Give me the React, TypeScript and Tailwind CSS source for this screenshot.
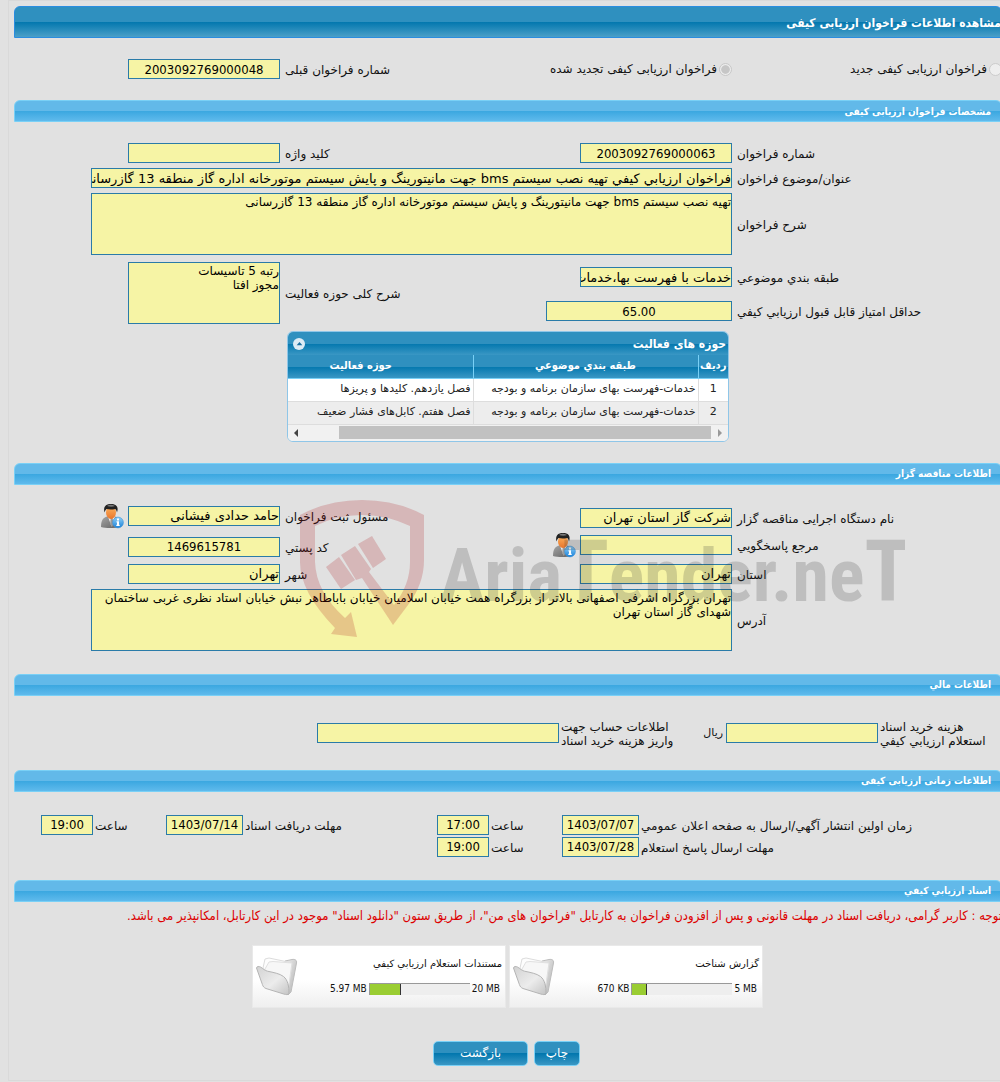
import React, { useId } from "react";

const condensed = "font-['DejaVu_Sans_Condensed','DejaVu_Sans',Tahoma,sans-serif]";
const regular = "font-['DejaVu_Sans',Tahoma,sans-serif]";

const fieldClass =
  "block rounded-none border border-[#2a7ba8] bg-[#f6f4a5] text-black outline-none";

function Bar({ children }: { children: React.ReactNode }) {
  return (
    <h2 className="flex h-[22px] items-center rounded-t-md border border-[#79d0f6] bg-[linear-gradient(#62b9e9_50%,#3aa7e0_50%,#5fbaec)] pr-2.5 text-[10px] font-bold text-white">
      {children}
    </h2>
  );
}

function Label({
  id,
  className,
  children,
}: {
  id: string;
  className: string;
  children: React.ReactNode;
}) {
  return (
    <label htmlFor={id} className={`pt-0.5 text-left text-[12px] leading-[14px] ${regular} ${className}`}>
      {children}
    </label>
  );
}

function TextField({
  label,
  value = "",
  labelClass,
  inputClass,
  center = false,
}: {
  label: React.ReactNode;
  value?: string;
  labelClass: string;
  inputClass: string;
  center?: boolean;
}) {
  const id = useId();
  return (
    <>
      <Label id={id} className={labelClass}>
        {label}
      </Label>
      <input
        id={id}
        readOnly
        defaultValue={value}
        className={`${fieldClass} h-5 text-[13px] ${center ? `text-center ${condensed}` : `text-right ${regular}`} ${inputClass}`}
      />
    </>
  );
}

function AreaField({
  label,
  value,
  labelClass,
  inputClass,
}: {
  label: string;
  value: string;
  labelClass: string;
  inputClass: string;
}) {
  const id = useId();
  return (
    <>
      <Label id={id} className={labelClass}>
        {label}
      </Label>
      <textarea
        id={id}
        readOnly
        defaultValue={value}
        className={`${fieldClass} ${regular} h-[62px] resize-none overflow-hidden pt-px text-[12px] leading-[14px] ${inputClass}`}
      />
    </>
  );
}

const mainLabel = "w-[270px] shrink-0 pl-[5px]";
const sideLabel = "flex-1 pl-[5px]";
const box = "w-[152px] shrink-0";

function PersonInfo({ label }: { label: string }) {
  return (
    <button type="button" aria-label={label} className="mr-1 block">
      <svg width="24" height="26" viewBox="0 0 24 26">
        <defs>
          <linearGradient id="suit" x1="0" y1="0" x2="1" y2="1">
            <stop offset="0" stopColor="#a5a5a5" />
            <stop offset="1" stopColor="#606060" />
          </linearGradient>
          <linearGradient id="skin" x1="0" y1="0" x2="0" y2="1">
            <stop offset="0" stopColor="#ffb45e" />
            <stop offset="1" stopColor="#e8762c" />
          </linearGradient>
          <linearGradient id="badge" x1="0" y1="0" x2="0" y2="1">
            <stop offset="0" stopColor="#8fd0f8" />
            <stop offset="1" stopColor="#1b82d8" />
          </linearGradient>
        </defs>
        <path d="M1 24c0-6.500 2-9.500 6-10.500h8c4 1 5 4 5 10-4 2-14 2-19 .5z" fill="url(#suit)" />
        <path d="M8 13.500l3.500 10 3.500-10z" fill="#f4f4f4" />
        <path d="M10.700 15h2l.8 6-1.600 3-1.800-3z" fill="#999" />
        <ellipse cx="11" cy="9.500" rx="5" ry="6.500" fill="url(#skin)" />
        <path d="M4.500 9.500C3 3.500 6 1 11 1S19 3.500 17 9.500c-.4-2-1-2.800-1.800-3.600C12 6.800 9 6.600 6.500 6 5.500 7 5 8 4.500 9.500z" fill="#222" />
        <path d="M7 2.900c2-1.400 5.500-1.400 8 .2-2.500 .8-5.500 .8-8-.2z" fill="#777" />
        <circle cx="18" cy="19.500" r="5.400" fill="url(#badge)" stroke="#3b91d6" strokeWidth=".6" />
        <path d="M17 15.500h2v2h-2zM16.500 18.300H19v3.500h.7v1.200h-3.400v-1.200h.7v-2.300h-.5z" fill="#fff" />
      </svg>
    </button>
  );
}

function Folder() {
  return (
    <svg width="44" height="40" viewBox="0 0 44 40" className="shrink-0">
      <defs>
        <linearGradient id="front" x1="0" y1="0" x2="1" y2="1">
          <stop offset="0" stopColor="#d2d2d2" />
          <stop offset=".55" stopColor="#ececec" />
          <stop offset="1" stopColor="#c4c4c4" />
        </linearGradient>
        <linearGradient id="back" x1="0" y1="0" x2="1" y2="1">
          <stop offset="0" stopColor="#f0f0f0" />
          <stop offset="1" stopColor="#b0b0b0" />
        </linearGradient>
      </defs>
      <path d="M30 5l7-1.500c3-.5 5 .5 4.500 3.500L36 36l-3 3z" fill="url(#back)" stroke="#bdbdbd" />
      <path d="M8 12l2-9 4-1 19 4 4 2-4 24-22-8z" fill="#fdfdfd" stroke="#dcdcdc" />
      <path d="M10 13l4-7 4-.5 19 1.500-4 28-20-9z" fill="#f7f7f7" stroke="#e0e0e0" />
      <path d="M1.500 12c.5-2 2.500-1.700 4-1 2.500 1.500 4 3.500 7 4.200 6 1.300 12 2.300 16 5.300 4.500 3.500 5.500 10 5.500 17-1 1.500-3 1.200-5 .6L11 32.500c-2-.8-3-2-3.600-4z" fill="url(#front)" stroke="#b4b4b4" />
    </svg>
  );
}

function FolderCard({
  title,
  used,
  total,
  percent,
}: {
  title: string;
  used: string;
  total: string;
  percent: number;
}) {
  return (
    <div dir="ltr" className="flex h-[63px] w-[254px] items-center border border-[#e9e9e9] bg-[linear-gradient(#fff_55%,#efefef)] pr-[3px] pl-0.5 text-[10px]">
      <Folder />
      <div className="flex flex-1 flex-col gap-3">
        <a href="#documents" dir="rtl" className={`block leading-[14px] ${regular}`}>
          {title}
        </a>
        <div className="flex items-center justify-end gap-0.5 pr-0.5 leading-3">
          <span>{used}</span>
          <div className="h-3 w-[101px] border-t border-l border-[#999] bg-[#eee]">
            <div className="h-full border-r border-[#333] bg-[#9acd32]" style={{ width: `${percent}%` }} />
          </div>
          <span>{total}</span>
        </div>
      </div>
    </div>
  );
}

function Watermark() {
  return (
    <svg
      aria-hidden="true"
      width="610"
      height="150"
      viewBox="295 495 610 150"
      className="pointer-events-none absolute right-[97px] bottom-1.5"
    >
      <g fill="#aa0f14" fillOpacity=".2">
        <path d="M300 515Q328 500 362 500T424 515V560Q424 584 408 605L393 625L362 578L356 580L341 555L355 546L371 569L369 572L394 605Q410 585 410 562V526Q387 515 362 515T315 526V562Q316 592 345 618L351 612L357 637L331 634L335 628Q300 592 300 562Z" />
        <path d="M326 567L339 557L355 580L341 589Z" />
        <path d="M358 544L372 536L386 559L373 568Z" />
      </g>
      <text
        x="440"
        y="601"
        direction="ltr"
        fill="#323232"
        fillOpacity=".2"
        fontFamily="'Liberation Sans Narrow','Roboto Condensed','Liberation Sans',sans-serif"
        fontWeight="700"
        fontSize="74"
      >
        Aria<tspan fontSize="86">T</tspan>ender.ne<tspan fontSize="86">T</tspan>
      </text>
    </svg>
  );
}

const rows = [
  ["1", "خدمات-فهرست بهای سازمان برنامه و بودجه", "فصل یازدهم. کلیدها و پریزها"],
  ["2", "خدمات-فهرست بهای سازمان برنامه و بودجه", "فصل هفتم. کابل‌های فشار ضعیف"],
];

const headGradient = "bg-[linear-gradient(#2f90bf_50%,#0277ae_50%,#3a97c4)]";

function ActivityTable() {
  return (
    <div className="mt-[7px] mr-[273px] w-[442px] overflow-hidden rounded-md border border-[#8fc6e8] bg-white text-[11px]">
      <div className={`flex h-[23px] items-center justify-between pr-0.5 pl-[5px] text-white ${headGradient}`}>
        <span className="text-[12px] font-bold">حوزه های فعالیت</span>
        <button type="button" aria-label="بستن جدول" className="flex size-3 items-center justify-center rounded-full bg-[#dcebf5]">
          <svg width="7" height="4" viewBox="0 0 8 5">
            <path d="M4 0l3.500 4h-7z" fill="#1a6fa0" />
          </svg>
        </button>
      </div>
      <div className="overflow-hidden">
        <table className="w-[479px] table-fixed border-collapse">
          <thead>
            <tr className={`h-[23px] text-[11px] text-white ${headGradient}`}>
              <th className="w-[30px] border-b border-l border-[#79d0f6] p-0 font-bold">ردیف</th>
              <th className="w-[225px] border-b border-l border-[#79d0f6] p-0 font-bold">طبقه بندي موضوعي</th>
              <th className="border-b border-[#79d0f6] p-0 font-bold">حوزه فعاليت</th>
            </tr>
          </thead>
          <tbody>
            {rows.map(([n, group, area]) => (
              <tr key={n} className={`h-[23px] text-[#222] even:bg-[#ededed] ${regular}`}>
                <td className="border-b border-l border-[#ddd] p-0 text-center">{n}</td>
                <td className="border-b border-l border-[#ddd] p-0 pr-0.5 whitespace-nowrap">{group}</td>
                <td className="border-b border-[#ddd] p-0 pr-0.5 whitespace-nowrap">{area}</td>
              </tr>
            ))}
          </tbody>
        </table>
      </div>
      <div dir="ltr" className="flex h-4 items-center bg-[#f1f1f1]">
        <svg width="17" height="16" viewBox="0 0 17 16">
          <path d="M10 4v8l-4-4z" fill="#444" />
        </svg>
        <div className="ml-[34px] h-[13px] flex-1 bg-[#c1c1c1]" />
        <svg width="17" height="16" viewBox="0 0 17 16">
          <path d="M7 4v8l4-4z" fill="#999" />
        </svg>
      </div>
    </div>
  );
}

export default function App() {
  return (
    <div dir="rtl" className={`overflow-hidden bg-[#e1e1e1] pb-px text-[#111] ${condensed}`}>
      <main className="-mr-0.5 ml-2 border-t border-b border-l border-[#d9d9d9] pt-[5px] pb-3.5 pl-[5px]">
        <h1 className="flex h-8 items-center rounded-t-md border border-[#2a8de0] bg-[linear-gradient(#2f90bf_50%,#0277ae_50%,#4a9fc8)] pt-0.5 text-[12px] font-bold text-white">
          مشاهده اطلاعات فراخوان ارزیابی کیفی
        </h1>

        <div className="mt-[21px] flex items-center">
          <label className={`flex w-[270px] items-center gap-0.5 text-[12px] leading-[14px] ${regular}`}>
            <input type="radio" name="kind" disabled className="size-[13px] appearance-none rounded-full border border-[#ccc] bg-[#eee]" />
            فراخوان ارزیابی کیفی جدید
          </label>
          <label className={`flex items-center gap-0.5 text-[12px] leading-[14px] ${regular}`}>
            <input
              type="radio"
              name="kind"
              disabled
              defaultChecked
              className="size-[13px] appearance-none rounded-full border border-[#c8c8c8] bg-[radial-gradient(#c6c6c6_50%,#ececec_60%)]"
            />
            فراخوان ارزیابی کیفی تجدید شده
          </label>
          <TextField label="شماره فراخوان قبلی" value="2003092769000048" center labelClass={sideLabel} inputClass={box} />
          <span className="w-[114px] shrink-0" />
        </div>

        <section className="mt-[21px]">
          <Bar>مشخصات فراخوان ارزیابی کیفی</Bar>
          <div className="mt-[21px] flex flex-col gap-[5px]">
            <div className="flex items-center pl-[114px]">
              <TextField label="شماره فراخوان" value="2003092769000063" center labelClass={mainLabel} inputClass={box} />
              <TextField label="کلید واژه" labelClass={sideLabel} inputClass={box} />
            </div>
            <div className="flex items-center pl-[77px]">
              <TextField
                label="عنوان/موضوع فراخوان"
                value="فراخوان ارزيابي کيفي تهیه نصب سیستم bms جهت مانیتورینگ و پایش سیستم موتورخانه اداره گاز منطقه 13 گازرسانی"
                labelClass={mainLabel}
                inputClass="min-w-0 flex-1"
              />
            </div>
            <div className="flex items-center pl-[77px]">
              <AreaField
                label="شرح فراخوان"
                value="تهیه نصب سیستم bms جهت مانیتورینگ و پایش سیستم موتورخانه اداره گاز منطقه 13 گازرسانی"
                labelClass={mainLabel}
                inputClass="min-w-0 flex-1"
              />
            </div>
          </div>
          <div className="mt-[7px] flex">
            <div className="flex flex-col gap-3.5 pt-[5px]">
              <div className="flex items-center">
                <TextField label="طبقه بندي موضوعي" value="خدمات با فهرست بها،خدمات عمومی" labelClass={mainLabel} inputClass={box} />
              </div>
              <div className="flex items-center">
                <TextField label="حداقل امتیاز قابل قبول ارزيابي کيفي" value="65.00" center labelClass={mainLabel} inputClass="w-[186px]" />
              </div>
            </div>
            <div className="flex flex-1 items-center pl-[114px]">
              <AreaField label="شرح کلی حوزه فعالیت" value={"رتبه 5 تاسیسات\nمجوز افتا"} labelClass={sideLabel} inputClass={box} />
            </div>
          </div>
          <ActivityTable />
        </section>

        <section className="relative mt-[21px]">
          <Bar>اطلاعات مناقصه گزار</Bar>
          <div className="mt-[21px] flex">
            <div className="flex w-[456px] flex-col pt-0.5">
              <div className="flex h-5 items-center">
                <TextField label="نام دستگاه اجرایی مناقصه گزار" value="شرکت گاز استان تهران" labelClass={mainLabel} inputClass={box} />
              </div>
              <div className="mt-[7px] flex h-5 items-center">
                <TextField label="مرجع پاسخگويي" labelClass={mainLabel} inputClass={box} />
                <PersonInfo label="اطلاعات مرجع پاسخگویی" />
              </div>
              <div className="mt-[9px] flex h-5 items-center">
                <TextField label="استان" value="تهران" labelClass={mainLabel} inputClass={box} />
              </div>
            </div>
            <div className="flex flex-1 flex-col">
              <div className="flex h-5 items-center">
                <TextField label="مسئول ثبت فراخوان" value="حامد حدادی فیشانی" labelClass={sideLabel} inputClass={box} />
                <span className="w-[114px] shrink-0">
                  <PersonInfo label="اطلاعات مسئول ثبت" />
                </span>
              </div>
              <div className="mt-[11px] flex h-5 items-center pl-[114px]">
                <TextField label="کد پستي" value="1469615781" center labelClass={sideLabel} inputClass={box} />
              </div>
              <div className="mt-[7px] flex h-5 items-center pl-[114px]">
                <TextField label="شهر" value="تهران" labelClass={sideLabel} inputClass={box} />
              </div>
            </div>
          </div>
          <div className="mt-[5px] flex items-center pl-[77px]">
            <AreaField
              label="آدرس"
              value="تهران بزرگراه اشرفی اصفهانی بالاتر از بزرگراه همت خیابان اسلامیان خیابان باباطاهر نبش خیابان استاد نظری غربی ساختمان شهدای گاز استان تهران"
              labelClass={mainLabel}
              inputClass="min-w-0 flex-1"
            />
          </div>
          <Watermark />
        </section>

        <section className="mt-[23px]">
          <Bar>اطلاعات مالي</Bar>
          <div className="mt-[22px] flex items-center">
            <TextField
              label={
                <>
                  <span className="block">هزینه خرید اسناد</span>
                  <span className="block whitespace-nowrap">استعلام ارزيابي کيفي</span>
                </>
              }
              labelClass="w-[124px] shrink-0 pl-0.5"
              inputClass={box}
            />
            <span className={`w-[23px] shrink-0 pt-0.5 pr-[3px] text-[11px] ${regular}`}>ریال</span>
            <TextField
              label={
                <>
                  <span className="block">اطلاعات حساب جهت</span>
                  <span className="block">واریز هزینه خرید اسناد</span>
                </>
              }
              labelClass="w-36 shrink-0 pl-0.5"
              inputClass="w-[242px]"
            />
          </div>
        </section>

        <section className="mt-[22px]">
          <Bar>اطلاعات زمانی ارزیابی کیفی</Bar>
          <div className="mt-[23px] flex flex-col gap-0.5">
            <div className="flex items-center pl-[27px]">
              <TextField
                label="زمان اولین انتشار آگهي/ارسال به صفحه اعلان عمومي"
                value="1403/07/07"
                center
                labelClass="w-[363px] shrink-0 pl-0.5"
                inputClass="w-[77px]"
              />
              <TextField label="ساعت" value="17:00" center labelClass="w-[73px] shrink-0 pl-0.5" inputClass="w-[52px]" />
              <TextField label="مهلت دریافت اسناد" value="1403/07/14" center labelClass="flex-1 pl-0.5" inputClass="w-[77px]" />
              <TextField label="ساعت" value="19:00" center labelClass="w-[73px] shrink-0 pl-0.5" inputClass="w-[52px]" />
            </div>
            <div className="flex items-center">
              <TextField label="مهلت ارسال پاسخ استعلام" value="1403/07/28" center labelClass="w-[363px] shrink-0 pl-0.5" inputClass="w-[77px]" />
              <TextField label="ساعت" value="19:00" center labelClass="w-[73px] shrink-0 pl-0.5" inputClass="w-[52px]" />
            </div>
          </div>
        </section>

        <section className="mt-[23px]">
          <Bar>اسناد ارزيابي کيفي</Bar>
          <p className="mt-[5px] text-[13px] leading-[18px] whitespace-nowrap text-[#dd0000]">
            توجه : کاربر گرامی، دریافت اسناد در مهلت قانونی و پس از افزودن فراخوان به کارتابل "فراخوان های من"، از طریق ستون "دانلود اسناد" موجود در این کارتابل، امکانپذیر می باشد.
          </p>
          <div className="mt-5 flex justify-center gap-[3px] pr-px">
            <FolderCard title="گزارش شناخت" used="670 KB" total="5 MB" percent={15} />
            <FolderCard title="مستندات استعلام ارزيابي کيفي" used="5.97 MB" total="20 MB" percent={31} />
          </div>
        </section>

        <div className={`mt-[33px] flex justify-center gap-1.5 pr-[3px] text-[12px] text-white ${regular}`}>
          <button type="button" className={`h-[25px] w-[46px] rounded-[5px] border border-[#79d0f6] ${headGradient}`}>
            چاپ
          </button>
          <button type="button" className={`h-[25px] w-[95px] rounded-[5px] border border-[#79d0f6] ${headGradient}`}>
            بازگشت
          </button>
        </div>
      </main>
    </div>
  );
}
